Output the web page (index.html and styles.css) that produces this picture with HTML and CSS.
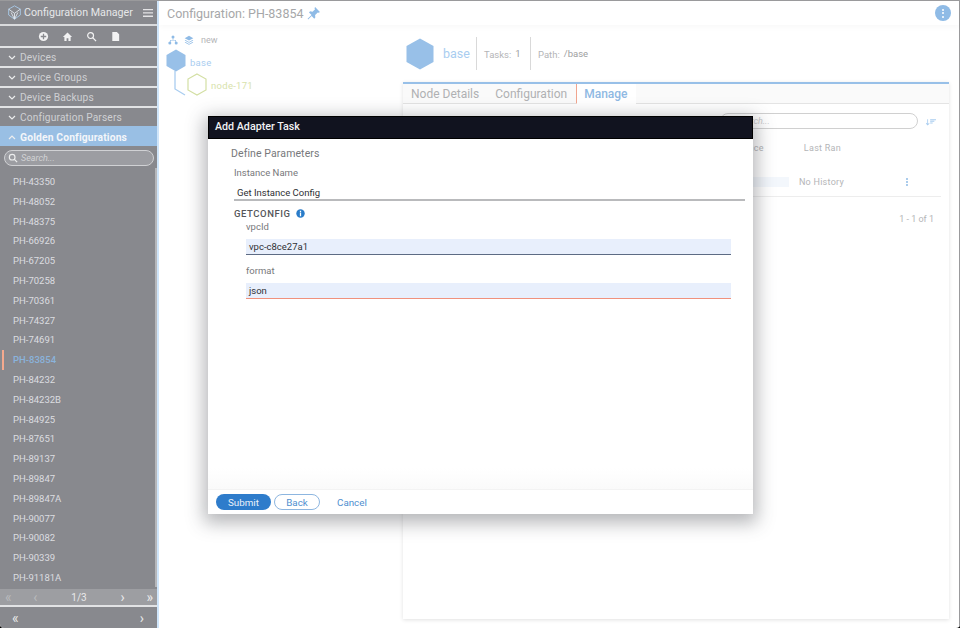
FILE: index.html
```html
<!DOCTYPE html>
<html lang="en">
<head>
<meta charset="utf-8">
<title>Configuration Manager</title>
<link rel="stylesheet" href="styles.css">
</head>
<body>
<div class="app">
  <aside class="sidebar">
    <div class="brand">
      <svg class="logo" viewBox="0 0 18 18" fill="none" stroke="#dfe6ee" stroke-width="1.1"><path d="M9 1l7 4v7l-7 5-7-5V5z" stroke="#a9c9e8"/><path d="M2 5l7 5 7-5M9 10v7M5 9l4 8 4-8"/></svg>
      <span class="brand-name">Configuration Manager</span>
      <svg class="burger" viewBox="0 0 10 8" fill="#e4e4e6"><path d="M0 0h10v1.3H0zM0 3.3h10v1.3H0zM0 6.6h10v1.3H0z"/></svg>
    </div>
    <div class="tools">
      <svg viewBox="0 0 12 12"><circle cx="6" cy="6" r="5" fill="#f2f2f3"/><path d="M6 3v6M3 6h6" stroke="#88898e" stroke-width="1.4"/></svg>
      <svg viewBox="0 0 12 12" fill="#f2f2f3"><path d="M6 1.5L1 6.5h1.6V11h2.4V8h2v3h2.4V6.500H11z"/></svg>
      <svg viewBox="0 0 12 12" fill="none" stroke="#f2f2f3" stroke-width="1.3"><circle cx="5" cy="5" r="3.2"/><path d="M7.400 7.400L11 11"/></svg>
      <svg viewBox="0 0 12 12" fill="#f2f2f3"><path d="M2.500 1H7.500L10 3.500V11H2.500z"/></svg>
    </div>
    <div class="section"><svg class="chev" viewBox="0 0 8 5"><path d="M1 1l3 3 3-3"/></svg>Devices</div>
    <div class="section"><svg class="chev" viewBox="0 0 8 5"><path d="M1 1l3 3 3-3"/></svg>Device Groups</div>
    <div class="section"><svg class="chev" viewBox="0 0 8 5"><path d="M1 1l3 3 3-3"/></svg>Device Backups</div>
    <div class="section"><svg class="chev" viewBox="0 0 8 5"><path d="M1 1l3 3 3-3"/></svg>Configuration Parsers</div>
    <div class="section section-open"><svg class="chev" viewBox="0 0 8 5"><path d="M1 4l3-3 3 3"/></svg>Golden Configurations</div>
    <div class="side-search">
      <svg viewBox="0 0 12 12" fill="none" stroke="#eceded" stroke-width="1.4"><circle cx="5" cy="5" r="3.400"/><path d="M7.500 7.500L11 11"/></svg>
      <span>Search...</span>
    </div>
    <div class="list-wrap">
      <ul class="list">
        <li>PH-43350</li><li>PH-48052</li><li>PH-48375</li><li>PH-66926</li><li>PH-67205</li>
        <li>PH-70258</li><li>PH-70361</li><li>PH-74327</li><li>PH-74691</li><li class="current">PH-83854</li>
        <li>PH-84232</li><li>PH-84232B</li><li>PH-84925</li><li>PH-87651</li><li>PH-89137</li>
        <li>PH-89847</li><li>PH-89847A</li><li>PH-90077</li><li>PH-90082</li><li>PH-90339</li><li>PH-91181A</li>
      </ul>
      <div class="scrollbar"></div>
    </div>
    <div class="pager">
      <span class="dim">«</span><span class="dim">‹</span><span class="page-num">1/3</span><span>›</span><span>»</span>
    </div>
    <div class="side-foot"><span>«</span><span>›</span></div>
  </aside>

  <main class="main">
    <header class="topbar">
      <h1>Configuration: PH-83854</h1>
      <svg class="pin" viewBox="0 0 14 14" fill="#8fbbe6"><path d="M8.500 1l4.500 4.500-1 .8-1-.3-2.500 2.500.2 2.300-1 1-2.400-2.500L2 12.500l-.5-.5 3.700-3.500L2.800 6l1-1 2.300.3L8.500 3l-.6-1z"/></svg>
      <span class="more"><i></i><i></i><i></i></span>
    </header>
    <div class="content">
      <section class="tree">
        <div class="tree-tools">
          <svg viewBox="0 0 10 10" fill="#8fbbe6"><circle cx="5" cy="2" r="1.500"/><circle cx="1.800" cy="8" r="1.500"/><circle cx="8.200" cy="8" r="1.500"/><path d="M4.700 3h.6v2H8v2h-.6V5.600H2.600V7H2V5h2.700z"/></svg>
          <svg viewBox="0 0 10 10" fill="#8fbbe6"><path d="M5 .8l4.300 2.400L5 5.600.7 3.200z"/><path d="M1.500 4.900L5 6.900l3.500-2 .8.500L5 7.800.7 5.400zM1.500 6.900L5 8.900l3.500-2 .8.500L5 9.800.7 7.400z"/></svg>
          <span>new</span>
        </div>
        <div class="node">
          <svg class="hex-base" viewBox="0 0 20 23"><path d="M10 .5L19.500 6v11L10 22.500.5 17V6z" fill="#98c0e8"/></svg>
          <span class="node-base">base</span>
        </div>
        <div class="node node-child">
          <svg class="elbow" viewBox="0 0 12 26" fill="none" stroke="#a9cdf0" stroke-width="1.300"><path d="M1 0v18l10 6"/></svg>
          <svg class="hex-child" viewBox="0 0 20 23"><path d="M10 1L19 6v11l-9 5-9-5V6z" fill="none" stroke="#d3dfa3" stroke-width="1.200"/></svg>
          <span class="node-name">node-171</span>
        </div>
      </section>

      <section class="detail">
        <div class="summary">
          <svg class="hex-big" viewBox="0 0 28 32"><path d="M14 .500L27.500 8v16L14 31.500.500 24V8z" fill="#98c0e8"/></svg>
          <span class="summary-name">base</span>
          <div class="fact"><span>Tasks:</span><b>1</b></div>
          <div class="fact"><span>Path:</span><b>/base</b></div>
        </div>
        <div class="panel">
          <div class="tabs">
            <span class="tab">Node Details</span>
            <span class="tab">Configuration</span>
            <span class="tab tab-active">Manage</span>
          </div>
          <div class="panel-tools">
            <div class="pill-search">Search...</div>
            <svg class="sort" viewBox="0 0 12 8" fill="#a9cdf0"><path d="M1.500 0h1v5.500L4 4.200v1.200L2 7.500 0 5.400V4.200l1.500 1.300zM5 0h7v1.200H5zM5 2h5v1.200H5zM5 4h3v1.200H5z"/></svg>
          </div>
          <div class="table">
            <div class="thead"><span class="th-inst">Instance</span><span class="th-ran">Last Ran</span></div>
            <div class="trow">
              <span class="status"></span>
              <span class="td-ran">No History</span>
              <span class="row-more"><i></i><i></i><i></i></span>
            </div>
          </div>
          <div class="count">1 - 1 of 1</div>
        </div>
      </section>
    </div>
  </main>

  <div class="modal">
    <div class="modal-title">Add Adapter Task</div>
    <div class="modal-body">
      <div class="define">Define Parameters</div>
      <div class="form">
        <label class="lbl">Instance Name</label>
        <div class="field field-plain">Get Instance Config</div>
        <div class="group">GETCONFIG
          <svg class="info" viewBox="0 0 10 10"><circle cx="5" cy="5" r="4.700" fill="#2a7cc9"/><path d="M4.300 2h1.400v1.200H4.300zM4.300 4h1.400v4H4.300z" fill="#fff"/></svg>
        </div>
        <div class="sub">
          <label class="lbl">vpcId</label>
          <div class="field field-fill">vpc-c8ce27a1</div>
          <label class="lbl lbl-format">format</label>
          <div class="field field-fill field-err">json</div>
        </div>
      </div>
    </div>
    <div class="modal-foot">
      <button class="btn btn-primary">Submit</button>
      <button class="btn btn-outline">Back</button>
      <button class="btn btn-link">Cancel</button>
    </div>
  </div>
</div>
</body>
</html>
```

FILE: styles.css
```css
* { box-sizing: border-box; }
html, body { margin: 0; height: 100%; }
body { font-family: Roboto, "Liberation Sans", sans-serif; background: #000; overflow: hidden; }
.app { position: relative; display: flex; width: 960px; height: 628px; background: #fff; border-top: 1px solid #9a9a9c; border-radius: 0 0 4px 4px; overflow: hidden; }

/* Sidebar */
.sidebar { width: 159px; flex: none; display: flex; flex-direction: column; background: #88898e; border-right: 2px solid #cfe5fa; color: #d9dadc; }
.brand { height: 23px; display: flex; align-items: center; padding: 0 4px 0 7px; }
.logo { width: 15px; height: 15px; flex: none; }
.brand-name { margin-left: 2px; font-size: 10.700px; color: #e6e7e9; white-space: nowrap; }
.burger { width: 10px; height: 8px; margin-left: auto; flex: none; }
.tools { height: 22px; border-top: 2px solid #d9dadc; display: flex; align-items: center; justify-content: center; gap: 13px; padding-left: 1px; }
.tools svg { width: 11px; height: 11px; }
.section { height: 20px; border-top: 2px solid #e2e3e5; display: flex; align-items: center; padding: 0 0 0 8px; font-size: 10.200px; letter-spacing: .015em; color: #cfd0d3; white-space: nowrap; }
.chev { width: 8px; height: 5px; margin-right: 4px; fill: none; stroke: #ecedee; stroke-width: 1.200; }
.section-open { background: #99bfe4; color: #f3f6fa; font-weight: 700; border-top-color: #99bfe4; font-size: 10.300px; }
.side-search { height: 16px; margin: 4px 3px 0 4px; border: 1px solid #d0d1d4; border-radius: 9px; background: #9c9da2; display: flex; align-items: center; padding-left: 3px; font-size: 9px; font-style: italic; color: #d2d3d5; flex: none; }
.side-search svg { width: 10px; height: 10px; margin-right: 3px; }
.list-wrap { position: relative; flex: 1; min-height: 0; overflow: hidden; }
.list { list-style: none; margin: 6px 0 0; padding: 0; }
.list li { height: 19.800px; line-height: 19.800px; padding-left: 13px; font-size: 9.500px; color: #dcdde0; }
.list li.current { color: #8ab3dc; font-weight: 500; position: relative; }
.list li.current::before { content: ""; position: absolute; left: 2px; top: 0; width: 2px; height: 20px; background: #f4a98e; }
.scrollbar { position: absolute; right: 0; top: 2px; bottom: 2px; width: 2px; background: #b6b7ba; }
.pager { height: 16px; background: #9d9ea2; display: flex; align-items: center; justify-content: space-between; padding: 0 4px 0 5px; font-size: 14px; color: #e9e9ea; flex: none; }
.pager .dim { color: #b9babd; }
.page-num { font-size: 10px; margin: 0 12px; }
.side-foot { height: 23px; border-top: 2px solid #e2e3e5; display: flex; align-items: center; justify-content: space-between; padding: 0 13px 0 12px; font-size: 14px; color: #e9e9ea; flex: none; }

/* Main */
.main { flex: 1; min-width: 0; display: flex; flex-direction: column; border-right: 1px solid #9a9a9c; }
.topbar { height: 24px; display: flex; align-items: center; padding: 0 8px 0 8px; flex: none; box-shadow: 0 2px 6px rgba(0,0,0,.03); }
.topbar h1 { margin: 0; font-size: 12.500px; font-weight: 400; color: #a6a7a9; white-space: nowrap; }
.pin { width: 15px; height: 15px; margin-left: 3px; }
.more { width: 16px; height: 16px; margin-left: auto; border-radius: 50%; background: #8fbbe6; display: flex; flex-direction: column; align-items: center; justify-content: center; gap: 1.500px; }
.more i { width: 2px; height: 2px; border-radius: 50%; background: #fff; }
.content { flex: 1; min-height: 0; display: flex; }
.tree { width: 244px; flex: none; padding: 8px 0 0 7px; }
.tree-tools { display: flex; align-items: center; gap: 6px; height: 14px; padding-left: 2px; font-size: 9px; color: #b4b5b7; }
.tree-tools svg { width: 10px; height: 10px; }
.tree-tools span { margin-left: 1px; }
.node { display: flex; align-items: center; position: relative; }
.hex-base { width: 20px; height: 23px; margin-top: 2px; }
.node-base { margin-left: 4px; padding-top: 5px; font-size: 9.500px; color: #a9cdf0; letter-spacing: .03em; }
.node-child { padding-left: 21px; margin-top: 1px; }
.elbow { position: absolute; left: 8px; top: -2px; width: 12px; height: 26px; }
.hex-child { width: 20px; height: 23px; }
.node-name { margin-left: 4px; padding-top: 2px; font-size: 9.500px; color: #d7e2ab; letter-spacing: .03em; }
.detail { flex: 1; min-width: 0; display: flex; flex-direction: column; padding-right: 10px; }
.summary { height: 57px; display: flex; align-items: center; padding-left: 3px; flex: none; }
.hex-big { width: 28px; height: 32px; }
.summary-name { margin-left: 9px; width: 26px; font-size: 12.500px; color: #a9cdf0; }
.fact { height: 33px; border-left: 1px solid #d9d9d9; margin-left: 7px; padding: 1px 0 0 7px; width: 47px; display: flex; align-items: center; gap: 4px; font-size: 9.500px; color: #b4b5b7; }
.fact b { font-weight: 400; color: #9d9ea0; position: relative; bottom: 1px; }
.panel { flex: 1; min-height: 0; margin: 0 0 9px; border-top: 2px solid #98c0e8; box-shadow: 0 1px 4px rgba(0,0,0,.12); background: #fff; }
.tabs { height: 20px; display: flex; align-items: stretch; padding-left: 8px; background: #fafafa; border-bottom: 1px solid #e4e4e4; font-size: 12px; color: #b0b1b3; }
.tab { display: flex; align-items: center; padding-right: 8px; margin-right: 8px; white-space: nowrap; }
.tab-active { margin: 0 0 0 -7px; padding: 0 8px 0 7px; background: #fff; border-left: 1px solid #f1a58f; color: #8fb9e3; font-weight: 500; border-bottom: 1px solid #fff; height: 20px; }
.panel-tools { display: flex; justify-content: flex-end; align-items: center; padding: 9px 13px 0 0; gap: 8px; }
.pill-search { width: 198px; height: 16px; border: 1px solid #d0d0d0; border-radius: 9px; padding-left: 15px; font-size: 9px; font-style: italic; line-height: 14px; color: #c9c9cb; }
.sort { width: 10px; height: 7px; margin-top: 3px; }
.table { margin: 12px 8px 0 0; font-size: 9px; letter-spacing: .03em; color: #b4b5b7; }
.thead { display: flex; height: 14px; align-items: center; justify-content: flex-end; }
.th-inst { margin-right: 40px; }
.th-ran { margin-right: 100px; }
.trow { height: 29px; margin-top: 13px; display: flex; align-items: center; justify-content: flex-end; border-bottom: 1px solid #ededed; }
.status { width: 37px; height: 10px; margin-right: 10px; background: #f3f7fc; }
.td-ran { margin-right: 62px; }
.row-more { display: flex; flex-direction: column; gap: 1px; margin-right: 33px; }
.row-more i { width: 2px; height: 2px; border-radius: 50%; background: #8fbbe6; }
.count { text-align: right; padding: 17px 15px 0 0; font-size: 9px; color: #b4b5b7; }

/* Modal */
.modal { position: absolute; left: 208px; top: 115px; width: 545px; height: 398px; display: flex; flex-direction: column; background: #fafafa; box-shadow: 0 5px 18px 4px rgba(60,62,70,.38); border-radius: 1px; }
.modal-title { height: 23px; flex: none; background: #11131f; border: 1px solid #000; padding-left: 6px; line-height: 19px; font-size: 10.700px; font-weight: 500; color: #f1f2f4; }
.modal-body { flex: 1; min-height: 0; background: linear-gradient(#fff 94%, #fafafa); padding: 8px 8px 0 23px; }
.define { font-size: 10.500px; letter-spacing: .01em; color: #77787b; line-height: 13px; }
.form { padding: 6px 0 0 3px; }
.lbl { display: block; font-size: 9.500px; color: #77787b; line-height: 13px; }
.field { font-size: 9.500px; color: #2f3034; padding-left: 3px; }
.field-plain { height: 17px; margin-top: 5px; padding-top: 1px; border-bottom: 2px solid #b9babc; line-height: 15px; }
.group { display: flex; align-items: center; margin-top: 6px; height: 12px; font-size: 9.500px; font-weight: 500; letter-spacing: .06em; color: #55565a; }
.info { width: 9px; height: 9px; margin-left: 5px; }
.sub { padding: 1px 14px 0 12px; }
.field-fill { height: 16px; margin-top: 6px; background: #e8effc; border-bottom: 1px solid #5d6b84; line-height: 16px; }
.lbl-format { margin-top: 9px; }
.field-err { border-bottom-color: #f0917d; }
.modal-foot { height: 25px; flex: none; background: #fff; border-top: 1px solid #f3f3f3; display: flex; align-items: center; padding-left: 8px; }
.btn { font: inherit; font-size: 9.800px; height: 16px; padding: 0; border-radius: 9px; background: none; border: 1px solid transparent; }
.btn-primary { width: 55px; background: #2e7ccb; color: #e9f1fa; }
.btn-outline { width: 46px; margin-left: 3px; border-color: #8db6e0; color: #4f8fcf; background: #fff; }
.btn-link { width: 30px; margin-left: 16px; color: #4f8fcf; }
```
